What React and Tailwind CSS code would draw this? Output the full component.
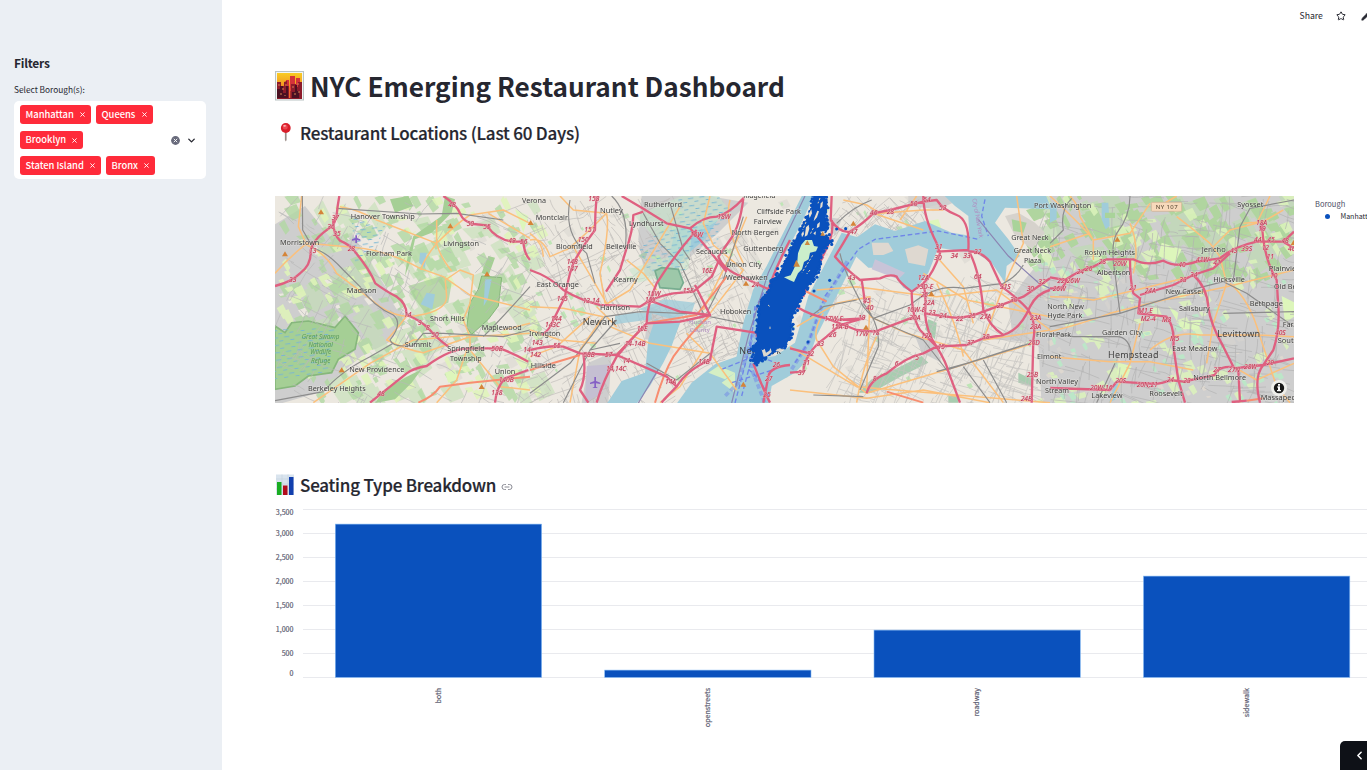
import React from "react";
import { Star, Pencil, ChevronDown, ChevronLeft, Link2 } from "lucide-react";

function rng(seed) {
  let s = seed;
  return () => {
    s = (s * 1664525 + 1013904223) % 4294967296;
    return s / 4294967296;
  };
}

/* ---------- base texture of the map: parks, lawns and local streets ---------- */
function patches(seed, n, x0, y0, w, h, size) {
  const r = rng(seed);
  let d = "";
  for (let i = 0; i < n; i++) {
    const x = x0 + r() * w;
    const y = y0 + r() * h;
    const a = size * (0.3 + r());
    const b = size * (0.3 + r());
    d += `M${x.toFixed(0)} ${y.toFixed(0)}l${a.toFixed(0)} ${(-b * 0.4).toFixed(0)}l${(b * 0.5).toFixed(0)} ${b.toFixed(0)}l${(-a * 0.8).toFixed(0)} ${(b * 0.4).toFixed(0)}z`;
  }
  return d;
}

function streets(seed, n, x0, y0, w, h, angle, len) {
  const r = rng(seed);
  let d = "";
  for (let i = 0; i < n; i++) {
    const t = angle + (r() > 0.5 ? Math.PI / 2 : 0) + (r() - 0.5) * 0.5;
    const l = len * (0.4 + r());
    const x = x0 + r() * w;
    const y = y0 + r() * h;
    d += `M${x.toFixed(0)} ${y.toFixed(0)}q${(Math.cos(t) * l * 0.5 + (r() - 0.5) * 16).toFixed(0)} ${(Math.sin(t) * l * 0.5 + (r() - 0.5) * 16).toFixed(0)} ${(Math.cos(t) * l).toFixed(0)} ${(Math.sin(t) * l).toFixed(0)}`;
  }
  return d;
}

const outline = [
  [250, 18], [285, 18], [292, 50], [286, 84], [296, 110], [275, 130], [306, 155], [280, 180],
  [270, 200], [272, 228], [250, 270], [225, 300], [205, 345], [185, 385], [185, 435], [165, 470],
  [130, 485], [105, 505], [80, 522], [66, 510], [76, 490], [64, 475], [80, 455], [82, 400],
  [86, 350], [100, 325], [118, 300], [122, 270], [150, 250], [160, 225], [185, 170], [205, 130],
  [225, 95], [245, 50],
];

function coastDots() {
  const r = rng(77);
  const dots = [];
  outline.forEach(([x, y], i) => {
    const [nx, ny] = outline[(i + 1) % outline.length];
    const n = Math.max(2, Math.round(Math.hypot(nx - x, ny - y) / 7));
    for (let k = 0; k < n; k++) {
      const t = k / n;
      dots.push([x + (nx - x) * t + (r() - 0.5) * 9, y + (ny - y) * t + (r() - 0.5) * 9]);
    }
  });
  return dots.concat([[299, 271], [252, 303], [234, 456], [320, 117], [347, 116], [285, 125], [143, 236], [298, 134], [287, 66], [292, 90], [164, 474]]);
}

const TILES = {
  a: {
    motorways: [
      "M208 18Q202 50 200 75Q195 95 190 105L160 128Q132 150 122 180Q125 225 90 250Q65 275 15 288",
      "M190 90Q188 130 210 152Q240 165 255 185Q300 240 316 280Q350 305 380 320Q410 340 410 375Q450 390 475 415Q500 445 535 470",
      "M520 18Q560 45 570 70Q580 95 610 102L650 106Q680 150 730 155L760 155Q762 190 780 210",
      "M300 638Q360 590 410 550Q430 535 470 528Q540 475 600 475L690 475Q730 490 775 515",
      "M675 638Q680 590 705 565L775 540",
    ],
    trunks: ["M445 638Q490 620 510 590L600 578L780 560"],
    roads: [
      "M15 250Q60 200 110 160L250 172Q350 180 450 235L520 260L600 315L780 360",
      "M95 18L85 110L110 165Q170 190 200 250Q280 310 330 350Q390 390 450 375Q530 360 530 320L526 270L570 240L610 255L600 340L580 390L600 440L600 480L690 590L780 600",
      "M210 50Q270 60 320 90L500 160Q560 100 600 75L700 60L780 100",
      "M500 90L500 160Q510 200 545 243M500 160Q460 210 452 240M655 70L780 145",
      "M410 378Q370 430 350 450Q410 480 460 488L600 440L780 430M130 638L300 520L430 450L600 435",
      "M590 480L560 570L500 638M700 420L780 400",
    ],
    rails: [
      "M97 18L98 120L130 175Q170 185 220 240L270 290Q310 350 370 375Q400 400 360 450Q370 475 430 465L460 430L520 430L700 440L780 420",
      "M200 55L450 72L560 70L700 90",
      "M15 632L160 605Q210 545 300 500L370 460M640 440Q700 380 780 290",
    ],
    labels: [
      ["Hanover Township", 242, 86, 192], ["Morristown", 30, 164, 118], ["Florham Park", 288, 199, 138],
      ["Madison", 230, 308, 90], ["Livingston", 520, 169, 107], ["Short Hills", 480, 392, 104],
      ["Maplewood", 635, 419, 120], ["Summit", 404, 470, 80], ["Springfield", 532, 482, 112],
      ["Township", 540, 512, 95], ["New Providence", 238, 545, 165], ["Berkeley Heights", 114, 602, 173],
      ["Union", 674, 553, 62], ["Verona", 756, 38, 72],
    ],
    shields: [["37", 185, 90], ["36", 172, 118], ["35", 190, 137], ["33", 57, 276], ["13", 117, 188], ["28", 233, 184], ["14", 402, 382], ["9", 444, 404], ["8", 468, 420], ["50B", 664, 484], ["140B", 686, 576], ["138", 664, 616], ["48", 535, 50], ["50", 590, 108], ["55", 640, 118], ["49", 715, 160], ["56", 750, 162], ["14", 760, 486], ["48", 322, 618], ["50", 484, 442]],
    peaks: [[153, 66], [45, 192], [541, 108], [651, 252], [215, 540], [635, 590]],
  },
  b: {
    motorways: [
      "M200 18Q195 70 195 120Q150 180 130 220L120 250Q110 290 105 320Q85 360 70 390Q60 420 35 435",
      "M275 18Q340 55 410 100L480 115Q520 80 560 80Q600 70 640 25Q630 110 600 150L565 200Q580 240 640 262L720 300",
      "M340 65L310 75Q310 120 285 190L270 240L228 305",
      "M500 120Q430 200 380 280Q350 350 350 400Q300 450 260 500Q220 570 200 638",
      "M0 240Q60 260 100 300Q150 330 210 345L330 350Q370 320 430 310L490 305L545 260L565 215",
      "M350 400L450 395L540 375L495 285M540 375L450 365L355 330",
      "M480 115Q520 160 565 215L590 245M780 150Q700 300 680 440",
      "M0 480Q60 465 100 470L150 490L260 495L350 400M160 490Q170 560 150 600L175 638",
      "M260 495L410 560L440 590Q400 630 395 638M440 590Q470 540 540 510L560 410L690 430",
      "M670 520Q700 600 720 638M780 525Q720 530 715 560L700 638",
    ],
    trunks: ["M260 495Q310 440 350 400L500 375L590 260", "M540 375Q480 430 430 500Q400 550 375 638", "M0 540L150 495"],
    roads: [
      "M0 150Q40 140 60 200L130 170L230 340M0 350L100 355L220 380L150 480L120 638",
      "M90 18L130 60L230 70Q240 120 210 250L225 340M230 70Q150 150 110 180M0 130Q40 160 40 200",
      "M450 50L300 300L225 345M540 18L520 100L550 165L640 240L540 370",
      "M290 210L340 250L380 300M600 30Q580 100 640 220M650 80L600 200L520 360M240 410L360 460L540 490L620 600M470 430L520 480L450 590L390 638M200 350L260 410",
      "M0 500L80 470L180 380M0 420L90 450L200 460",
    ],
    rails: [
      "M0 610L120 520Q200 420 225 380L330 365L500 372L640 400M340 70L390 160L450 220L520 370",
      "M420 40L460 180L480 210M640 80L580 270L530 370M100 638L180 480L260 390M180 480L270 460M350 520L440 570L540 490",
      "M245 18Q300 70 285 180M120 30Q100 130 170 190L195 280",
    ],
    labels: [
      ["Montclair", 17, 89, 97], ["Nutley", 210, 68, 68], ["Rutherford", 342, 51, 114], ["Lyndhurst", 297, 108, 104],
      ["Bloomfield", 78, 178, 110], ["Belleville", 228, 177, 91], ["East Orange", 20, 291, 127],
      ["Kearny", 251, 275, 72], ["Harrison", 210, 359, 90], ["Hoboken", 570, 372, 94], ["Irvington", -3, 437, 94],
      ["Hillside", 2, 534, 76], ["Cliffside Park", 680, 71, 133], ["Fairview", 671, 103, 84],
      ["North Bergen", 605, 136, 141], ["Guttenberg", 640, 184, 120], ["Secaucus", 498, 191, 94],
      ["Union City", 588, 232, 107], ["Weehawken", 588, 270, 125], ["Ridgefield", 640, 24, 96],
    ],
    shields: [["153", 175, 34], ["151", 163, 125], ["150", 143, 156], ["148", 110, 222], ["147", 110, 242], ["145", 80, 334], ["144", 62, 392], ["143C", 45, 411], ["13-14", 158, 340], ["15W", 352, 317], ["15X", 345, 337], ["15E", 320, 424], ["14-14B", 284, 468], ["14,14C", 228, 542], ["14", 278, 520], ["58B", 160, 500], ["57", 225, 500], ["16W", 480, 142], ["18W", 562, 86], ["16E", 515, 248], ["15E", 458, 310], ["14A", 405, 582], ["24", 665, 290], ["14B", 505, 522], ["142", 0, 500], ["143", 5, 466], ["55", 70, 474], ["26", 728, 530], ["27", 705, 572], ["25", 700, 620]],
    peaks: [[2, 98], [640, 583], [648, 280]],
  },
  c: {
    motorways: [
      "M125 18L122 90Q150 130 180 125Q220 100 250 70L300 60L400 35L440 30Q460 60 500 75Q540 90 535 180L440 185",
      "M400 18Q400 80 440 160L450 190Q430 250 400 280L365 305Q325 275 320 260Q300 250 270 265L210 270Q160 230 135 200Q160 160 180 125",
      "M535 185Q570 180 600 215L635 290Q690 330 715 360Q740 400 730 450L725 638",
      "M400 280Q410 320 405 370Q410 430 440 470Q470 520 475 545L510 638",
      "M365 300Q365 380 390 420L440 470L530 465L580 445L640 435Q690 420 720 350Q740 310 780 300",
      "M405 370Q440 375 470 380Q520 390 580 365L700 320L780 265M540 190Q570 250 580 360Q600 410 640 435",
      "M20 350Q60 375 110 385L200 420L255 425L375 380M220 385L150 405L110 440Q70 470 60 490L0 475M60 490Q40 520 40 545L0 548",
      "M220 385L140 390M215 270Q220 300 225 340M230 610Q240 570 290 550Q350 500 400 490L440 470M100 200L60 260",
      "M125 90Q135 130 100 195Q60 240 40 320",
    ],
    trunks: ["M290 605L400 638", "M40 300L110 335"],
    roads: [
      "M80 300L200 290L350 310L440 320L620 300L780 420",
      "M250 70L310 90L400 120M160 30L230 45L270 70L400 60L460 60M330 90L380 18",
      "M100 370Q70 420 80 450L130 530L230 610L500 530L730 460M0 470L200 590L780 638",
      "M20 410L140 340L240 320L230 600M240 380L350 430L520 480L640 638M400 250L530 330L780 380",
      "M0 600L230 625L400 600L600 638M260 440Q220 520 200 638M440 200L520 290L550 400M680 18L700 160L640 290L580 450L780 420M440 280Q500 400 520 500",
    ],
    rails: [
      "M150 190Q160 240 220 350L250 385Q330 420 400 450L470 540L720 460",
      "M200 330L100 350L60 380M250 385L360 345Q440 280 520 295L640 280Q680 260 700 225M245 30Q190 50 140 100",
      "M220 340Q270 400 265 470L210 600M440 545L530 520L700 465M520 530L600 638M580 510L650 638M70 615L220 620",
    ],
    labels: [
      ["Port Washington", 732, 54, 172], ["Great Neck", 664, 151, 112], ["Great Neck", 671, 190, 112],
      ["Plaza", 702, 219, 52], ["North New", 772, 357, 110], ["Hyde Park", 772, 385, 105], ["Floral Park", 738, 442, 105],
      ["Elmont", 741, 508, 73], ["North Valley", 738, 582, 126], ["Stream", 765, 609, 72],
    ],
    shields: [["46", 240, 76], ["28", 290, 72], ["50", 360, 48], ["54", 400, 36], ["47", 180, 132], ["53", 447, 60], ["31", 435, 178], ["30", 433, 210], ["34", 482, 204], ["33", 520, 204], ["32", 552, 192], ["64", 552, 268], ["43", 174, 270], ["45", 220, 338], ["40", 228, 360], ["12A", 383, 270], ["13D-E", 378, 296], ["25", 392, 320], ["22A", 400, 346], ["10W-E", 350, 366], ["20A", 358, 390], ["23", 415, 374], ["24", 448, 384], ["22", 498, 392], ["25", 535, 384], ["27A", 570, 386], ["19", 204, 390], ["17W-E", 103, 394], ["15A-B", 124, 418], ["17W", 196, 438], ["18", 246, 434], ["26", 117, 442], ["33", 80, 468], ["32", 50, 498], ["31", 38, 524], ["37", 24, 554], ["12A", 393, 445], ["15", 443, 476], ["37", 530, 465], ["38", 576, 446], ["29", 620, 354], ["30", 660, 336], ["30", 710, 302], ["32", 745, 282], ["31S", 630, 298], ["23A", 720, 390], ["23A", 720, 416], ["26D", 714, 464], ["25B", 710, 560], ["24B", 692, 634], ["8", 248, 574], ["6", 314, 528], ["5", 376, 510]],
    peaks: [[190, 100], [424, 311], [228, 412]],
  },
  d: {
    motorways: [
      "M0 262L45 270Q90 240 130 230L170 208L250 208Q290 230 340 212Q380 235 440 215L510 205Q550 170 620 155L700 155L732 175M700 155L732 125",
      "M240 208Q240 270 250 310L270 325L265 370L350 380Q375 410 370 470L385 570L405 638",
      "M270 315L370 285L430 255L490 235L540 190",
      "M430 255Q470 290 475 350Q480 400 520 470L550 530Q500 530 495 555L400 575L360 570Q330 585 290 580L200 575L180 600L0 594",
      "M635 100L640 150Q650 220 680 270L685 350Q690 420 670 480L640 525L550 535M640 525Q610 560 630 638M640 525L732 505M565 540L570 638",
      "M590 632L545 636M0 295L35 295Q60 260 45 270",
    ],
    trunks: ["M590 632L640 625"],
    roads: [
      "M0 425Q100 400 180 370L340 330L530 290L732 240M0 320Q80 320 130 330L280 295L420 260",
      "M0 18Q110 120 130 150L240 130L300 40M60 18Q90 50 90 80L130 150L130 210",
      "M0 500L180 515L300 515L430 540M270 400L240 520L180 638",
      "M240 100Q270 170 250 250M380 80Q420 110 480 160L510 200L530 280L490 400L470 520",
      "M490 170L540 120L620 100L660 18M540 280Q600 330 630 440L680 590L720 638M300 480Q370 420 450 435L630 435L732 440",
      "M0 170L120 130M380 18L310 60M550 530L620 570L732 520M580 100L640 95L700 60",
    ],
    rails: [
      "M0 410L210 370L440 295L520 275L590 310L732 410M240 18Q240 80 200 130Q180 170 195 250L210 370M0 430L70 440L200 440Q240 440 245 500",
      "M65 25Q30 60 40 120L0 160M550 270L570 110L600 55L732 30M195 520L140 638M520 370L732 365",
    ],
    labels: [
      ["Roslyn Heights", 103, 196, 152], ["Albertson", 141, 256, 100], ["Jericho", 455, 186, 72], ["Hicksville", 490, 275, 95],
      ["New Cassel", 347, 311, 112], ["Salisbury", 387, 362, 92], ["Garden City", 156, 436, 120],
      ["East Meadow", 367, 484, 135], ["Roosevelt", 298, 619, 100], ["Lakeview", 124, 624, 94],
      ["North Bellmore", 430, 571, 158], ["Syosset", 562, 52, 78], ["Plainview", 656, 243, 100], ["Old Bethpage", 672, 297, 140],
      ["Bethpage", 599, 348, 100], ["Farmingdale", 698, 412, 130], ["South", 683, 460, 62], ["Massapequa", 632, 630, 132],
    ],
    shields: [["18A", 618, 104], ["19", 625, 124], ["44", 612, 156], ["45", 652, 156], ["12", 635, 180], ["48", 694, 158], ["46", 714, 184], ["43", 540, 188], ["39S", 574, 182], ["41W", 438, 216], ["40", 385, 232], ["41", 490, 226], ["20W", 190, 228], ["28", 146, 222], ["22", 22, 278], ["26W", 50, 280], ["26W", 8, 302], ["34", 420, 262], ["33", 388, 277], ["21", 238, 300], ["24A", 284, 310], ["M1,E", 265, 368], ["M2-4", 272, 392], ["M3", 336, 396], ["M5", 360, 454], ["24", 350, 576], ["23", 400, 578], ["20N,21", 260, 590], ["20W-16", 120, 600], ["20S", 196, 578], ["27", 490, 547], ["28W", 582, 536], ["29", 650, 524], ["27N", 534, 547], ["11", 650, 208], ["10", 660, 264], ["40S", 675, 436], ["26", 105, 242], ["24", 80, 252]],
    peaks: [[202, 148], [731, 158]],
  },
};

function Tile({ x, tile }) {
  return (
    <g transform={`translate(${x} -18)`}>
      <g fill="none" strokeLinejoin="round">
        <path d={tile.roads.join("")} stroke="#fbc07c" strokeWidth="4.5" />
        <path d={tile.rails.join("")} stroke="#8c8c8c" strokeWidth="3.5" />
        <path d={tile.trunks.join("")} stroke="#f88d70" strokeWidth="6" />
        <path d={tile.motorways.join("")} stroke="#df6080" strokeWidth="7" />
      </g>
    </g>
  );
}

function TileText({ x, tile }) {
  return (
    <g transform={`translate(${x} -18)`} fontFamily="'Noto Sans', sans-serif">
      {tile.peaks.map(([px, py], i) => (
        <path key={i} d={`M${px} ${py - 8}l9 15h-18z`} fill="#d58438" />
      ))}
      <g fontSize="20" fontStyle="italic" fill="#b9304c" stroke="#eeb9c1" strokeWidth="2" paintOrder="stroke">
        {tile.shields.map(([t, tx, ty], i) => (
          <text key={i} x={tx} y={ty}>{t}</text>
        ))}
      </g>
      <g fontSize="22" fill="#3c3c3c" stroke="#f4f2ec" strokeOpacity="0.5" strokeWidth="3" paintOrder="stroke">
        {tile.labels.map(([t, tx, ty, w], i) => (
          <text key={i} x={tx} y={ty} textLength={w} lengthAdjust="spacingAndGlyphs">{t}</text>
        ))}
      </g>
    </g>
  );
}

function RestaurantMap() {
  const dots = coastDots();
  return (
    <svg className="block h-[207px] w-[1019px]" viewBox="0 0 3057 621">
      <defs>
        <pattern id="marsh" width="34" height="22" patternUnits="userSpaceOnUse" patternTransform="rotate(-8)">
          <path d="M2 5h16M20 15h12" stroke="#78b6d4" strokeWidth="3" />
        </pattern>
        <filter id="raster" filterUnits="userSpaceOnUse" x="-10" y="-10" width="3077" height="641">
          <feGaussianBlur stdDeviation="1.15" />
        </filter>
      </defs>
      <g filter="url(#raster)">
        <rect x="-10" y="-10" width="3077" height="641" fill="#ece8e0" />
        {/* built-up areas */}
        <g fill="#cecece">
          <path d="M-9 90L90 30L170 130L230 110L330 270L390 360L340 440L260 480L130 590L-9 630z" />
          <path d="M1100 0H1300L1420 20L1330 110L1180 240L1110 240L1090 130z" />
          <path d="M1120 330L1220 370L1190 440L1110 430z M940 500L1010 470L1000 621H920z" />
          <path d="M2250 250L2200 320L2210 400L2150 430L2290 440L2300 630H3067V-9H2320L2350 130z" />
          <path d="M1920 420L1980 440L2000 500L1940 470z M1640 60L1700 70L1680 120z M2080 0L1990 40L1900 30V0z" />
        </g>
        <path d={patches(9, 90, 400, 0, 2500, 600, 26)} fill="#d8d5cf" opacity="0.55" />
        <path d={patches(31, 70, 0, 0, 760, 600, 62)} fill="#c3dfb4" opacity="0.6" />
        <path d={patches(3, 190, 0, 0, 780, 600, 30)} fill="#b2d8a2" opacity="0.8" />
        <path d={patches(4, 110, 0, 0, 780, 600, 26)} fill="#dff5b8" opacity="0.85" />
        <path d={patches(14, 60, 0, 0, 740, 600, 18)} fill="#ece8e0" />
        <path d={patches(5, 80, 760, 0, 1540, 600, 17)} fill="#bfe5b6" />
        <path d={patches(32, 45, 2270, -10, 780, 220, 60)} fill="#bddbb0" opacity="0.65" />
        <path d={patches(6, 150, 2250, 0, 780, 240, 30)} fill="#b0d59f" />
        <path d={patches(7, 105, 2280, 0, 760, 620, 26)} fill="#dcf3bb" opacity="0.85" />
        <path d={patches(8, 70, 2280, 200, 760, 420, 15)} fill="#bce6c8" />
        <path d={patches(18, 40, 2280, 200, 760, 420, 12)} fill="#ded8d0" />
        {/* forests and reserves */}
        <g fill="#a5cf95">
          <path d="M0 390L30 410L50 380L100 375L180 395L210 360L250 410L240 460L190 490L170 530L100 540L60 570L0 580z" stroke="#86b77b" strokeWidth="5" />
          <path d="M620 240L680 245L670 330L640 370L590 415L575 395L585 320L610 280z" stroke="#86b77b" strokeWidth="3" />
          <path d="M510 0L540 10L530 50L470 110L420 130L405 200L390 240L398 180L415 120L500 60z" />
          <path d="M640 180L660 185L640 240L620 230z M345 10L400 0L415 30L360 50z M440 520L410 560L360 610L300 621L330 580L400 540z" />
          <path d="M400 270L500 240L530 260L520 320L450 350L420 310z" opacity="0.7" />
        </g>
        <g fill="#a8cdb0">
          <path d="M1790 550L1860 520L1940 480L1960 500L1880 540L1790 590L1750 590z" />
          <path d="M1960 370L1985 380L1980 430L1950 400z M1090 180L1120 160L1110 190z" />
          <path d="M2020 600h30v20h-30z M2230 530l40 20v20l-40-10z" />
        </g>
        <g fill="#ddf6bb">
          <path d="M2680 330L2710 350L2705 380L2780 370L2770 400L2720 400z M2660 140L2720 160L2700 200L2650 180z M2530 500l40 10l-15 40l-30-15z M3020 300l40 20v40l-30 20z" />
          <path d="M1960 75L1990 70L2000 100L1960 90z M720 40L760 60L745 110z M510 530l30-10l10 30l-30 10z" />
        </g>
        <path d="M630 250l20 0l-12 60l-12 20z" fill="#a0ccda" />
        {/* local streets */}
        <g fill="none" strokeWidth="2">
          <path d={streets(21, 190, 0, 0, 780, 620, 0.5, 70)} stroke="#b8b8b8" />
          <path d={streets(22, 300, 770, 0, 500, 620, 1.1, 75)} stroke="#bebbb8" />
          <path d={streets(23, 140, 1250, 100, 180, 400, 1.1, 60)} stroke="#bebbb8" />
          <path d={streets(24, 330, 1680, 240, 600, 380, 0.4, 85)} stroke="#c4c2bf" />
          <path d={streets(25, 70, 1690, 0, 260, 100, 0.8, 55)} stroke="#bebbb8" />
          <path d={streets(26, 330, 2280, 0, 770, 620, 0.2, 80)} stroke="#b2b2b2" />
        </g>
        {/* water */}
        <g fill="#a0ccda">
          <path d="M1585 -9L1525 110L1475 210L1435 280L1405 380L1385 480L1350 630H1480L1490 570L1560 530L1600 490L1625 420L1680 310L1740 190L1770 130L1700 110L1600 300L1560 440L1500 480L1440 490L1450 340L1500 230L1580 80L1620 -9z" />
          <path d="M1215 380L1190 450L1165 500L1125 570L1080 630H991L1040 555L1110 530L1120 430L1140 370z" />
          <path d="M1200 630L1250 560L1320 505L1390 480L1385 630z" />
          <path d="M2000 -9L2040 30L2080 60L2085 160L2150 200L2190 260L2195 210L2235 180L2200 130L2160 80L2190 35L2330 40L2310 -9z" />
          <path d="M1730 135L1800 85L1860 105L1950 75L2030 110L2090 120L2090 170L1990 155L1960 230L1915 290L1885 275L1840 215L1780 215L1720 160z" />
          <path d="M1200 100L1270 90L1330 70L1290 130L1230 180L1200 220L1180 200z M2480 20l20 0l4 70l-12 10l-12-30z M2325 20l20 0v50l-20 10z M435 170l20 0l-5 45l-18-15z M455 290l25 5l-8 45l-35-15z M2520 560l12-10l-10 60l-20 10z" />
          <path d="M1020 360L1060 350L1130 350L1130 370L1020 385z M1090 340L1170 310L1260 320L1250 350L1190 370z" opacity="0.8" />
        </g>
        <path d="M1080 60L1220 0H1330L1370 50L1250 120L1240 220L1090 260L1060 220L1190 180z" fill="#c7e6ca" opacity="0.55" />
        <path d="M1300 530l30-20l50 20l-30 20z M1340 560l40-30v60z" fill="#d5efc4" />
        <path d="M1090 150L1330 0L1380 60L1250 130L1230 230L1120 230z M230 60L330 90L300 170L240 200z M0 400L180 395L160 530L0 550z M1210 0h120v160h-120z" fill="url(#marsh)" />
        <path d="M1140 225l20-10l50 5l15 40l-10 20l-60-5z" fill="#9dc8a9" stroke="#77ad90" strokeWidth="5" />
        {/* airports and islands */}
        <path d="M935 510L1010 505L975 595L930 621z" fill="#c5bfd2" />
        <path d="M1790 140h50l15 25l-30 12h-30z M1890 160L1930 148L1960 160L1950 210L1900 200z" fill="#ded8d0" />
        <path d="M1800 190l90 40l-20 20l-80-30z" fill="#c8c4d8" />
        <path d="M2190 60L2230 50L2280 80L2310 110L2270 160L2220 120z" fill="#d6d2cc" />
        <path d="M2210 70l45 10l-10 30l-30-5z M2490 50l30 0v16l-30 0z" fill="#a9d39a" />
        {/* ferry lines and boundaries */}
        <g fill="none" stroke="#6f86e8" strokeWidth="4" strokeDasharray="14 8">
          <path d="M1380 621L1420 470L1445 330L1470 280M1400 600L1440 450M1480 600Q1450 540 1420 520M1560 500L1600 440L1650 300L1750 160L1800 130L1990 105L2110 130M1340 520L1440 480M1370 560L1500 520M2130 10L2120 60L2140 120M1440 330L1425 470L1500 500" />
          <path d="M1435 410L1390 560L1350 600M1455 350L1430 520L1470 621M1550 520L1600 440L1640 330L1720 190" opacity="0.5" strokeWidth="11" />
        </g>
        <path d="M1590 0L1480 230L1420 420L1370 621M2110 70L2200 180L2290 260L2330 280M1090 621L1150 520" fill="none" stroke="#8b84b2" strokeWidth="3.5" />
        <Tile x={-15} tile={TILES.a} />
        <Tile x={765} tile={TILES.b} />
        <Tile x={1545} tile={TILES.c} />
        <Tile x={2325} tile={TILES.d} />
        <TileText x={-15} tile={TILES.a} />
        <TileText x={765} tile={TILES.b} />
        <TileText x={1545} tile={TILES.c} />
        <TileText x={2325} tile={TILES.d} />
        <g fontFamily="'Noto Sans', sans-serif" fill="#434343" fontSize="27">
          <text x="923" y="387" textLength="100">Newark</text>
          <text x="2499" y="486" textLength="152">Hempstead</text>
          <text x="2827" y="423" textLength="128">Levittown</text>
          <text x="1393" y="474" textLength="125">New York</text>
        </g>
        <g fontFamily="'Noto Sans', sans-serif" fontStyle="italic" fontSize="19" fill="#5a9a5c" textAnchor="middle">
          <text x="137" y="428">Great Swamp</text><text x="137" y="452">National</text>
          <text x="137" y="475">Wildlife</text><text x="137" y="500">Refuge</text>
        </g>
        <g fontFamily="'Noto Sans', sans-serif" fontSize="18" fill="#b08cc0">
          <text x="1242" y="385">Hudson</text><text x="1244" y="408">County</text>
          <text transform="translate(2092 8) rotate(80)" textLength="120">City of New York</text>
        </g>
        <rect x="2629" y="19" width="91" height="27" rx="3" fill="#f7d9bb" stroke="#cfae8e" strokeWidth="2" />
        <text x="2642" y="39" fontFamily="'Noto Sans', sans-serif" fontSize="18" fill="#50402c" textLength="66">NY 107</text>
        <g fill="#8560c5">
          <path d="M241 118h5v8l10 4v4l-10-1v8h-5v-8l-10 1v-4l10-4z" />
          <path d="M958 543h5v12l13 5v4l-13-2v10l6 4h-17l6-4v-10l-13 2v-4l13-5z" />
        </g>
      </g>
      {/* restaurant points */}
      <g transform="translate(1365 -18)">
        <path d={"M" + outline.map((p) => p.join(" ")).join("L") + "z"} fill="#0a51bd" />
        <g fill="#0a51bd">
          {dots.map(([x, y], i) => <circle key={i} cx={x} cy={y} r="4.7" />)}
        </g>
        <path d="M214 164L226 150L246 150L252 168L264 170L258 184L240 188L236 208L222 216L216 238L204 250L192 276L178 270L162 262L182 256L190 240L202 214L204 190z" fill="#cbeecb" />
        <path d="M228 112l8-8l2 12l-6 20l-8 4z M262 62l5 2l-6 18l-10 12l2-10z M262 102l8-6l-2 14l-8 5z M270 125l14-2l-2 14z M236 72l8-14l2 12l-7 14z M272 40l7-6l-2 16l-7 6z M250 130l8-6l-2 12z M214 132l6-9l2 9l-6 10z" fill="#e8dfd0" />
        <path d="M248 196l-32 52M228 96l-10 24M250 114l-10 20M120 410v12M270 24l-6 16M240 240l-10 12M114 345l5 4M140 478h22M95 480l10 8" fill="none" stroke="#d8cfb8" strokeWidth="3" strokeDasharray="7 5" />
        <path d="M96 482l8-6l4 12l10-6l4-8l3 12l-14 12l-10 2z M136 482l14-8l6 6l-8 5z" fill="#dcd8cf" />
        <path d="M232 151l8 14h-16z M199 209l11 21h-20z M278 124l7 13h-14z" fill="#cc8840" />
      </g>
      <circle cx="3012" cy="576" r="24" fill="#efefeb" />
      <circle cx="3012" cy="576" r="15.5" fill="#161616" />
      <path d="M3009 569h6v-5h-6zM3007 571h8v11h3v4h-12v-4h3v-7h-2z" fill="#fff" />
    </svg>
  );
}

/* ---------- seating chart ---------- */
const TICKS = [["3,500", 514.8], ["3,000", 536], ["2,500", 560], ["2,000", 584], ["1,500", 608], ["1,000", 632], ["500", 656], ["0", 676]];
const GRID = [509.5, 533.5, 557.5, 581.5, 605.5, 629.5, 653.5, 677.5];
const BARS = [["both", 335.3, 524.1], ["openstreets", 604.7, 670.1], ["roadway", 874, 630.1], ["sidewalk", 1143.5, 576.1]];

function SeatingChart() {
  return (
    <svg className="block h-[240px] w-[1092px]" viewBox="275 500 1092 240">
      {GRID.map((y) => <path key={y} d={`M303 ${y}H1367`} stroke="#e9eaee" />)}
      <g fontFamily="'Noto Sans CJK SC', sans-serif" fontSize="7.1" fill="#5e6073" stroke="#5e6073" strokeWidth="0.2">
        {TICKS.map(([t, y]) => <text key={t} x="293.5" y={y} textAnchor="end">{t}</text>)}
        {BARS.map(([t, x]) => (
          <text key={t} transform={`translate(${x + 105.4} 688) rotate(-90)`} textAnchor="end">{t}</text>
        ))}
      </g>
      {BARS.map(([t, x, y]) => (
        <rect key={t} x={x} y={y} width="206.3" height={677.4 - y} fill="#0a51bd" stroke="#83b8f2" strokeWidth="0.6" />
      ))}
    </svg>
  );
}

/* ---------- heading pictures ---------- */
function CityIcon() {
  return (
    <svg className="h-[30px] w-[29px] shrink-0" viewBox="0 0 29 30">
      <defs>
        <linearGradient id="dusk" x1="0" y1="0" x2="0" y2="1">
          <stop offset="0" stopColor="#f8cc24" /><stop offset="0.45" stopColor="#f39b22" /><stop offset="1" stopColor="#c72c21" />
        </linearGradient>
      </defs>
      <rect x="0.5" y="0.5" width="28" height="28.5" fill="#f1f5f3" stroke="#b9c3c4" />
      <rect x="2" y="2" width="25" height="25.5" fill="url(#dusk)" />
      <path d="M11 9h3v18h-3zM15 5h5v22h-5zM21 7h4v20h-4z" fill="#d4333a" />
      <path d="M2 11h4v4h3v-4l3-1v5h2v5h2v-7h5v3h2v-5h4v17H2z" fill="#8d1b2b" />
      <path d="M2 18h3v-3h3v7h3v-7h2v12H2zM17 21h3v-7h2v6h2v7h-7z" fill="#4b1022" />
      <path d="M4 13v2M8 17v2M11 13v2M18 15v2M23 12v2M20 22v2M6 22v2M24 20v2M10 24v1" stroke="#d98251" />
      <path d="M14 17h1.3v10H14z" fill="#f36a2b" />
    </svg>
  );
}

function PinIcon() {
  return (
    <svg className="h-[22px] w-5 shrink-0" viewBox="0 0 20 22">
      <path d="M9.9 9h1.7v9l-.8 1.6-.9-1.6z" fill="#9a8c88" />
      <circle cx="10.8" cy="6" r="4.9" fill="#d91e2a" />
      <circle cx="10.2" cy="4.9" r="2.5" fill="#ec4650" />
      <ellipse cx="9.6" cy="3.8" rx="1.4" ry="0.9" fill="#ffb5b5" />
    </svg>
  );
}

function ChartIcon() {
  return (
    <svg className="h-[22px] w-5 shrink-0" viewBox="0 0 20 22">
      <rect x="1" y="0.5" width="18" height="20.5" fill="#d9e4ee" />
      <path d="M1 5h18M1 10h18M1 15h18M7 .5v20M13 .5v20" stroke="#c2d1de" strokeWidth="0.6" />
      <path d="M2 8h4.5v13H2z" fill="#19ad22" />
      <path d="M8 11.5h4.5V21H8z" fill="#b20d1c" />
      <path d="M14 3h4.5v18H14z" fill="#123fae" />
    </svg>
  );
}

function Tag({ name, w }) {
  return (
    <span className={`flex h-[18.5px] shrink-0 items-center justify-between rounded-[3px] bg-[#ff2b3a] pr-[6px] pl-[5.5px] text-[9.4px] leading-none font-medium text-white ${w}`}>
      <span>{name}</span>
      <svg className="h-[5px] w-[5px]" viewBox="0 0 5 5"><path d="M.4.4l4.2 4.2M4.6.4L.4 4.6" stroke="#fff" strokeWidth="0.9" /></svg>
    </span>
  );
}

export default function App() {
  return (
    <div className="flex h-[770px] w-[1367px] overflow-hidden bg-white font-['Noto_Sans_CJK_SC',sans-serif] text-[#262730]">
      <aside className="h-full w-[222px] shrink-0 bg-[#ebeff4] px-[14px] pt-[54px]">
        <h2 className="h-[18px] text-[12px] leading-[18px] font-bold tracking-[-0.25px]">Filters</h2>
        <p className="mt-[10px] h-[14px] text-[8.3px] leading-[14px]">Select Borough(s):</p>
        <div className="mt-[5px] flex h-[78px] w-[192px] items-center rounded-[5px] bg-white pr-[9px] pl-[6px]">
          <div className="flex flex-1 flex-col gap-[7px]">
            <div className="flex gap-[5px]"><Tag name="Manhattan" w="w-[71px]" /><Tag name="Queens" w="w-[57px]" /></div>
            <div className="flex"><Tag name="Brooklyn" w="w-[63px]" /></div>
            <div className="flex gap-[5px]"><Tag name="Staten Island" w="w-[81px]" /><Tag name="Bronx" w="w-[49px]" /></div>
          </div>
          <svg className="mr-[6px] h-[9px] w-[9px]" viewBox="0 0 9 9"><circle cx="4.5" cy="4.5" r="4.4" fill="#686a7b" /><path d="M2.8 2.8l3.4 3.4M6.2 2.8L2.8 6.2" stroke="#fff" strokeWidth="0.9" /></svg>
          <ChevronDown size={11} strokeWidth={3} />
        </div>
      </aside>
      <main className="relative flex h-full min-w-0 flex-1 flex-col pl-[53px]">
        <header className="flex h-[31px] shrink-0 items-center pl-[1024.5px] text-[8.7px]">
          <span className="w-[36.5px] shrink-0">Share</span>
          <Star className="mt-px shrink-0" size={10} strokeWidth={2.4} />
          <Pencil className="mt-px ml-[15px] shrink-0" size={9} fill="currentColor" strokeWidth={2} />
        </header>
        <h1 className="mt-[35px] flex h-[40px] shrink-0 items-center gap-[6px] text-[26.2px] leading-[40px] font-bold whitespace-nowrap"><CityIcon />NYC Emerging Restaurant Dashboard</h1>
        <h2 className="mt-[12px] flex h-[30px] shrink-0 items-center gap-[5px] text-[17px] leading-[30px] font-medium tracking-[-0.2px] whitespace-nowrap [-webkit-text-stroke:0.2px_#262730]"><PinIcon />Restaurant Locations (Last 60 Days)</h2>
        <section className="mt-[48px] flex h-[207px] shrink-0 gap-[21px]">
          <div className="w-[1019px] shrink-0"><RestaurantMap /></div>
          <div className="shrink-0 pt-[1px] whitespace-nowrap">
            <p className="h-[13px] text-[7.5px] leading-[13px] text-[#4b4d64]">Borough</p>
            <p className="flex h-[13px] items-center gap-[11px] pl-[10px] text-[7px] leading-[13px]"><span className="h-[4.5px] w-[4.5px] rounded-full bg-[#0a51bd]" />Manhattan</p>
          </div>
        </section>
        <h2 className="mt-[67px] flex h-[30px] shrink-0 items-center gap-[5px] text-[17px] leading-[30px] font-medium tracking-[-0.2px] whitespace-nowrap [-webkit-text-stroke:0.2px_#262730]"><ChartIcon />Seating Type Breakdown<Link2 className="mt-[4px] text-[#8a8b94]" size={12} strokeWidth={2} /></h2>
        <SeatingChart />
        <button className="absolute right-0 bottom-0 flex h-[29px] w-[27px] items-center rounded-tl-[5px] bg-[#0e1117] pl-[13px] text-white"><ChevronLeft size={13} strokeWidth={2.8} /></button>
      </main>
    </div>
  );
}
